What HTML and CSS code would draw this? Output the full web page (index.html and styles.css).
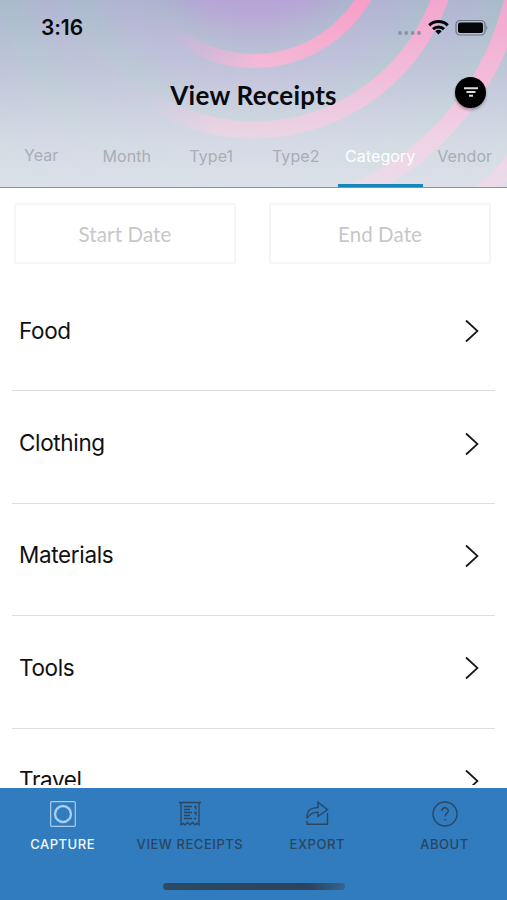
FILE: index.html
```html
<!DOCTYPE html>
<html lang="en">
<head>
<meta charset="utf-8">
<title>View Receipts</title>
<link rel="stylesheet" href="styles.css">
</head>
<body>
<div class="app">
  <header class="header">
    <svg class="backdrop" viewBox="0 0 507 187" aria-hidden="true">
      <defs>
        <radialGradient id="glow" gradientUnits="userSpaceOnUse" cx="254" cy="-67" r="410">
          <stop offset="0" stop-color="#b49ad4"/>
          <stop offset=".2" stop-color="#b19fd3"/>
          <stop offset=".295" stop-color="#a6b1ca"/>
          <stop offset=".36" stop-color="#aeaed1"/>
          <stop offset=".46" stop-color="#a3b7c8"/>
          <stop offset=".53" stop-color="#abb0cf"/>
          <stop offset=".63" stop-color="#a2b7c7"/>
          <stop offset=".71" stop-color="#a9b0ce"/>
          <stop offset=".82" stop-color="#a2b6c6"/>
          <stop offset="1" stop-color="#adb5cd"/>
        </radialGradient>
        <linearGradient id="ring" gradientUnits="userSpaceOnUse" x1="145" y1="0" x2="350" y2="0">
          <stop offset="0" stop-color="#b9a4d8" stop-opacity="0"/>
          <stop offset=".14" stop-color="#c5a4d8" stop-opacity=".25"/>
          <stop offset=".35" stop-color="#e0a0d0" stop-opacity=".75"/>
          <stop offset=".55" stop-color="#f4a0ca"/>
          <stop offset="1" stop-color="#f898c4"/>
        </linearGradient>
        <linearGradient id="ringWide" gradientUnits="userSpaceOnUse" x1="60" y1="0" x2="400" y2="0">
          <stop offset="0" stop-color="#b9a8dc" stop-opacity=".05"/>
          <stop offset=".25" stop-color="#c4a6dc" stop-opacity=".2"/>
          <stop offset=".45" stop-color="#f3a6ce" stop-opacity=".75"/>
          <stop offset="1" stop-color="#f3a0cc"/>
        </linearGradient>
        <linearGradient id="mist" x1="0" y1="0" x2="0" y2="1">
          <stop offset="0" stop-color="#f0f1f3" stop-opacity=".07"/>
          <stop offset=".4" stop-color="#f0f1f3" stop-opacity=".34"/>
          <stop offset=".75" stop-color="#eceff2" stop-opacity=".65"/>
          <stop offset="1" stop-color="#e9ebef" stop-opacity=".8"/>
        </linearGradient>
      </defs>
      <rect width="507" height="187" fill="url(#glow)"/>
      <g fill="none">
        <circle cx="254" cy="-67" r="128" stroke="url(#ring)" stroke-width="14"/>
        <circle cx="254" cy="-67" r="197" stroke="url(#ringWide)" stroke-width="17"/>
        <ellipse cx="254" cy="-67" rx="267" ry="279" stroke="url(#ringWide)" stroke-width="18"/>
        <circle cx="254" cy="-67" r="346" stroke="url(#ringWide)" stroke-width="18"/>
      </g>
      <rect width="507" height="187" fill="url(#mist)"/>
    </svg>
    <div class="status">
      <span class="clock">3:16</span>
      <svg class="indicators" width="92" height="20" viewBox="0 0 92 20" aria-hidden="true">
        <g fill="#8f8fa8"><circle cx="4" cy="15" r="1.900"/><circle cx="10.300" cy="15" r="1.900"/><circle cx="16.700" cy="15" r="1.900"/><circle cx="23" cy="15" r="1.900"/></g>
        <g fill="none" stroke="#05050a" stroke-width="3"><path d="M33.300 7.300a13.200 13.200 0 0 1 18.400 0"/><path d="M37 11.200a8 8 0 0 1 11 0"/></g>
        <path d="M39.300 13.300a4.700 4.700 0 0 1 6.400 0L42.500 16.600z" fill="#05050a"/>
        <rect x="60" y="2.500" width="29" height="14.500" rx="4" fill="none" stroke="#6d7184" stroke-width="1.200"/>
        <rect x="62" y="4.500" width="25" height="10.500" rx="2" fill="#05050a"/>
        <path d="M90.400 7.500q2 2.200 0 4.500z" fill="#6d7184"/>
      </svg>
    </div>
    <div class="titlebar">
      <h1>View Receipts</h1>
      <button class="filter" aria-label="Filter">
        <svg width="14" height="10" viewBox="0 0 14 10"><path d="M0 1.200h14M2.500 5h9M5 8.700h4" fill="none" stroke="#ddd" stroke-width="1.900"/></svg>
      </button>
    </div>
    <nav class="tabs">
      <a class="tab first">Year</a>
      <a class="tab">Month</a>
      <a class="tab">Type1</a>
      <a class="tab">Type2</a>
      <a class="tab active">Category</a>
      <a class="tab">Vendor</a>
    </nav>
  </header>
  <main class="content">
    <div class="dates">
      <div class="date">Start Date</div>
      <div class="date">End Date</div>
    </div>
    <ul class="list">
      <li><span>Food</span><svg class="chevron" viewBox="0 0 14 24"><path d="M1 1.500 12.500 12 1 22.500"/></svg></li>
      <li><span>Clothing</span><svg class="chevron" viewBox="0 0 14 24"><path d="M1 1.500 12.500 12 1 22.500"/></svg></li>
      <li><span>Materials</span><svg class="chevron" viewBox="0 0 14 24"><path d="M1 1.500 12.500 12 1 22.500"/></svg></li>
      <li><span>Tools</span><svg class="chevron" viewBox="0 0 14 24"><path d="M1 1.500 12.500 12 1 22.500"/></svg></li>
      <li><span>Travel</span><svg class="chevron" viewBox="0 0 14 24"><path d="M1 1.500 12.500 12 1 22.500"/></svg></li>
    </ul>
  </main>
  <footer class="footer">
    <nav class="bottom-nav">
      <a class="item current">
        <svg viewBox="0 0 28 28"><rect x="1.700" y="1.700" width="24.600" height="24.600" rx="1" stroke-width="1.200"/><circle cx="14" cy="14" r="8" stroke-width="2.400"/></svg>
        <span>CAPTURE</span>
      </a>
      <a class="item">
        <svg viewBox="0 0 28 28"><path d="M3 2.500h22M5 2.500v22.300l2-1.400 2 1.400 2.500-2.300 2.500 2.300 2.500-2.300 2.500 2.300 2-1.400 2 1.400V2.500" stroke-width="1.300"/><path d="M8 6.500h8M8 9.500h6M8 12.500h8M8 15.500h6M8 18.500h8M18 6.500h1.800v3M18 12.500h2v3M18 18.500h2" stroke-width="1.300"/></svg>
        <span>VIEW RECEIPTS</span>
      </a>
      <a class="item">
        <svg viewBox="0 0 28 28"><path d="M4 18.500V15C4.500 10.500 8.500 7.700 15 7.500V2.200L24.500 9.800 15 16.500v-4.400C9.500 12.300 6 14.500 4 18.500M4 21v3.200h20.500V13"/></svg>
        <span>EXPORT</span>
      </a>
      <a class="item">
        <svg viewBox="0 0 28 28"><circle cx="14" cy="14" r="12"/><path d="M10.900 10.900c0-4.200 6.300-4.200 6.300-.2 0 2.800-3 2.600-3 5.500M14.200 19v1.600"/></svg>
        <span>ABOUT</span>
      </a>
    </nav>
    <div class="home-indicator"></div>
  </footer>
</div>
</body>
</html>
```

FILE: styles.css
```css
* { box-sizing: border-box; }
body { margin: 0; font-family: Inter, "Liberation Sans", sans-serif; background: #fff; }
.app { width: 507px; height: 900px; display: flex; flex-direction: column; overflow: hidden; }

.header { position: relative; flex: none; height: 188px; border-bottom: 1px solid #8d9098; }
.backdrop { position: absolute; inset: 0; width: 507px; height: 187px; z-index: -1; }
.status { height: 56px; padding: 0 19px 0 41px; display: flex; align-items: center; justify-content: space-between; }
.clock { font-size: 21px; font-weight: 600; line-height: 24px; letter-spacing: -.1px; color: #07070c; }
.titlebar { height: 76px; padding: 0 21px 0 52px; display: flex; align-items: center; }
h1 { flex: 1; margin: 2px 0 0; text-align: center; font: 700 26px/34px Lato, sans-serif; letter-spacing: .25px; color: #090910; }
.filter { flex: none; width: 31px; height: 31px; margin: -4px 0 0; padding: 0; border: 0; border-radius: 50%; background: #000; display: grid; place-items: center; box-shadow: 0 2px 3px rgba(0, 0, 0, .3); }
.tabs { height: 55px; display: grid; grid-template-columns: repeat(6, 1fr); }
.tab { padding-top: 14px; text-align: center; font-size: 16px; line-height: 20px; letter-spacing: .07px; color: #a9adb5; border-bottom: 3px solid transparent; }
.tab.first { padding: 13px 2px 0 0; }
.tab.active { color: #fff; border-color: #1687bd; }

.content { flex: 1; min-height: 0; margin-bottom: 3px; overflow: hidden; }
.dates { display: grid; grid-template-columns: 1fr 1fr; gap: 33px; padding: 15px 16px 0 14px; }
.date { height: 61px; border: 2px solid #f5f5f7; border-radius: 2px; text-align: center; font: 400 20.500px/58px Lato, sans-serif; letter-spacing: .1px; color: #c7c7c9; }
.list { list-style: none; margin: 15px 12px 0; padding: 0; }
.list li { height: 112.4px; padding: 0 16px 9px 7px; display: flex; align-items: center; justify-content: space-between; border-bottom: 1px solid #dedede; font-size: 22.500px; letter-spacing: -.35px; color: #111; }
.chevron { width: 14px; height: 24px; fill: none; stroke: #151515; stroke-width: 1.700; margin-top: 2px; }

.footer { flex: none; height: 112px; background: #307cbe; }
.bottom-nav { height: 94px; display: grid; grid-template-columns: repeat(4, 127.300px); margin-left: -1px; }
.item { padding-top: 12px; display: flex; flex-direction: column; align-items: center; gap: 7px; color: #2b4560; }
.item svg { width: 28px; height: 28px; fill: none; stroke: currentColor; stroke-width: 1.400; }
.item span { font-size: 13px; font-weight: 500; line-height: 19px; letter-spacing: .55px; white-space: nowrap; }
.item.current { color: #f4f9fe; }
.item.current svg { stroke: #a9cdf0; }
.home-indicator { width: 182px; height: 7px; margin: 1px 0 0 163px; border-radius: 4px; background: linear-gradient(90deg, #2e4963, #2d435d 80%, #35648e); }
```
